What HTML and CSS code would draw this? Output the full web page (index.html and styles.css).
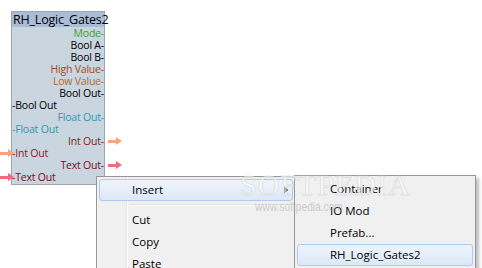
FILE: index.html
```html
<!DOCTYPE html>
<html>
<head>
  <title>Logic Gates</title>
  <link rel="stylesheet" href="styles.css">
</head>
<body>
  <div class="canvas">
    <div class="node">
      <div class="node-title">RH_Logic_Gates2</div>
      <div class="node-body">
        <div class="port in mode">Mode-</div>
        <div class="port in">Bool A-</div>
        <div class="port in">Bool B-</div>
        <div class="port in high">High Value-</div>
        <div class="port in low">Low Value-</div>
        <div class="port in">Bool Out-</div>
        <div class="port out">-Bool Out</div>
        <div class="port in float">Float Out-</div>
        <div class="port out float">-Float Out</div>
        <div class="port in int">Int Out-<span class="pin pin-right pin-int"></span></div>
        <div class="port out int"><span class="pin pin-left pin-int"></span>-Int Out</div>
        <div class="port in text">Text Out-<span class="pin pin-right pin-text"></span></div>
        <div class="port out text"><span class="pin pin-left pin-text"></span>-Text Out</div>
      </div>
    </div>

    <div class="menu main-menu">
      <div class="menu-item active">Insert<span class="sub-arrow"></span></div>
      <div class="menu-sep"></div>
      <div class="menu-item">Cut</div>
      <div class="menu-item">Copy</div>
      <div class="menu-item">Paste</div>
    </div>

    <div class="menu sub-menu">
      <div class="menu-item">Container</div>
      <div class="menu-item">IO Mod</div>
      <div class="menu-item">Prefab...</div>
      <div class="menu-item active">RH_Logic_Gates2</div>
    </div>

    <div class="watermark">SOFTPEDIA</div>
    <div class="watermark-url">www.softpedia.com</div>
  </div>
</body>
</html>
```

FILE: styles.css
```css
body {
  margin: 0;
  background-color: #fff;
  font-family: "Open Sans", "Noto Sans", sans-serif;
  overflow: hidden;
}

.canvas {
  position: relative;
  width: 482px;
  height: 268px;
  overflow: hidden;
}

/* node on the canvas */
.node {
  position: absolute;
  left: 11px;
  top: 11px;
  width: 92px;
  border: 1px solid #9aa6b0;
  background-color: #c9d6df;
}

.node-title {
  height: 15px;
  line-height: 15px;
  font-size: 12.5px;
  background-color: #a9bed6;
  color: #000;
  padding-left: 1px;
  white-space: nowrap;
  letter-spacing: -0.2px;
}

.node-body {
  padding-bottom: 1px;
}

.port {
  position: relative;
  height: 12px;
  line-height: 12px;
  font-size: 10.5px;
  color: #000;
  white-space: nowrap;
  letter-spacing: -0.2px;
}

.port.in {
  text-align: right;
}

.port.out {
  text-align: left;
}

.mode { color: #3aa332; }
.high { color: #a24a28; }
.low { color: #b26a2e; }
.float { color: #2a9cb0; }
.int { color: #8a1c1c; }
.text { color: #7e0a22; }

.pin {
  position: absolute;
  top: 5px;
  width: 9px;
  height: 3px;
}

.pin::after {
  content: '';
  position: absolute;
  top: -3px;
  right: -5px;
  border-left: 6px solid transparent;
  border-top: 4.5px solid transparent;
  border-bottom: 4.5px solid transparent;
}

.pin-right {
  right: -13px;
}

.pin-left {
  left: -12px;
}

.pin-int { background-color: #f6a67a; }
.pin-int::after { border-left-color: #f6a67a; }
.pin-text { background-color: #f2687c; }
.pin-text::after { border-left-color: #f2687c; }

/* context menus */
.menu {
  position: absolute;
  background-color: #f0f0f0;
  border: 1px solid #979797;
  font-size: 11.5px;
  color: #000;
  padding: 2px;
}

.main-menu {
  left: 96px;
  top: 176px;
  width: 194px;
  height: 100px;
  background-image: linear-gradient(to right, transparent 29px, #e2e3e3 29px, #e2e3e3 30px, #fff 30px, #fff 31px, transparent 31px);
}

.sub-menu {
  left: 294px;
  top: 175px;
  width: 176px;
  height: 100px;
  box-shadow: 3px 3px 3px rgba(0, 0, 0, 0.25);
}

.menu-item {
  position: relative;
  height: 20px;
  line-height: 20px;
  padding-left: 33px;
  border: 1px solid transparent;
  border-radius: 3px;
}

.menu-item.active {
  border-color: #aecbef;
  background-image: linear-gradient(#eef4fc, #dde8f7);
}

.main-menu .menu-item {
  padding-left: 32px;
}

.sub-menu .menu-item {
  padding-left: 32px;
}

.sub-arrow {
  position: absolute;
  right: 4px;
  top: 6px;
  border-left: 4px solid #000;
  border-top: 4px solid transparent;
  border-bottom: 4px solid transparent;
}

.menu-sep {
  height: 1px;
  margin: 3px 0 3px 31px;
  background-color: #e0e0e0;
  border-bottom: 1px solid #fff;
}

.watermark {
  position: absolute;
  left: 240px;
  top: 168px;
  font-family: "Liberation Serif", serif;
  font-size: 30px;
  color: rgba(255, 255, 255, 0.7);
  -webkit-text-stroke: 1px rgba(200, 200, 200, 0.45);
  letter-spacing: 1px;
  pointer-events: none;
}

.watermark-url {
  position: absolute;
  left: 255px;
  top: 200px;
  font-family: "Liberation Sans", sans-serif;
  font-size: 12px;
  color: rgba(170, 170, 170, 0.55);
  transform: scaleX(0.85);
  transform-origin: left;
  pointer-events: none;
}
```
